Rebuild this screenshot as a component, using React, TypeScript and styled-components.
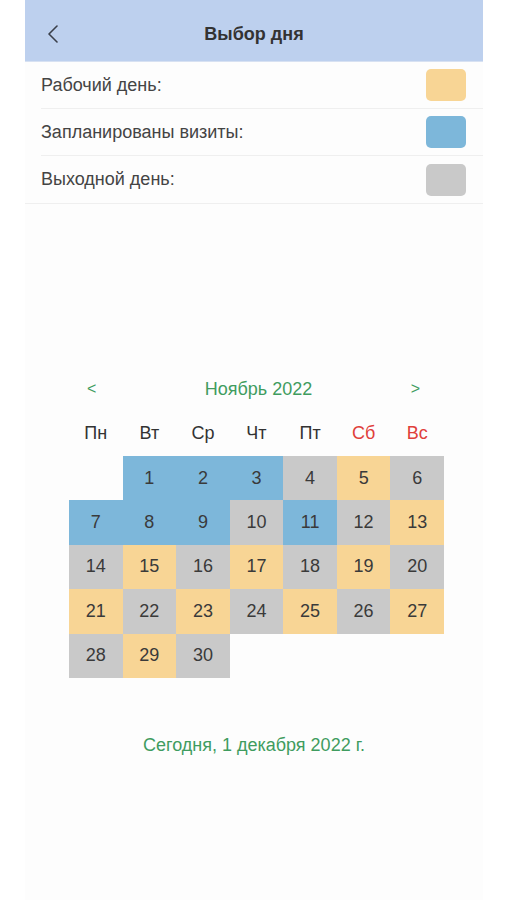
import React from 'react';
import styled, { createGlobalStyle } from 'styled-components';

const GlobalStyle = createGlobalStyle`
  html, body {
    margin: 0;
    padding: 0;
    background: #ffffff;
    font-family: "Liberation Sans", Arial, sans-serif;
  }
`;

const Screen = styled.div`
  width: 458px;
  min-height: 900px;
  margin-left: 25px;
  background: #fdfdfd;
  display: flex;
  flex-direction: column;
`;

const Header = styled.div`
  height: 62px;
  padding-top: 7px;
  background: #bdd0ee;
  display: flex;
  align-items: center;
  justify-content: center;
  position: relative;
  border-bottom: 1px solid #d7e1f2;
  box-sizing: border-box;
`;

const BackButton = styled.button`
  position: absolute;
  left: 18px;
  top: 24px;
  width: 20px;
  height: 20px;
  padding: 0;
  border: none;
  background: transparent;
  display: flex;
  align-items: center;
  justify-content: center;
`;

const Title = styled.div`
  font-size: 18px;
  font-weight: bold;
  color: #333333;
`;

const Legend = styled.div`
  border-bottom: 1px solid #efefef;
`;

const LegendRow = styled.div<{ $last?: boolean }>`
  height: 47px;
  margin-left: 16px;
  padding-right: 17px;
  display: flex;
  align-items: center;
  justify-content: space-between;
  border-bottom: ${p => (p.$last ? 'none' : '1px solid #efefef')};
  box-sizing: border-box;
`;

const LegendLabel = styled.span`
  font-size: 18px;
  color: #444444;
`;

const Swatch = styled.div<{ $color: string }>`
  width: 40px;
  height: 32px;
  border-radius: 5px;
  background: ${p => p.$color};
`;

const Calendar = styled.div`
  width: 375px;
  margin: 173px auto 0;
  padding-left: 5px;
`;

const MonthBar = styled.div`
  display: grid;
  grid-template-columns: 1fr auto 1fr;
  align-items: center;
  height: 24px;
  padding: 0 14px 0 18px;
  color: #3f9c5f;
  font-size: 18px;
`;

const NavArrow = styled.span<{ $right?: boolean }>`
  font-size: 16px;
  color: #3f9c5f;
  justify-self: ${p => (p.$right ? 'end' : 'start')};
  margin-right: ${p => (p.$right ? '10px' : '0')};
`;

const Grid = styled.div`
  display: grid;
  grid-template-columns: repeat(7, 1fr);
`;

const WeekDay = styled.div<{ $weekend?: boolean }>`
  height: 55px;
  padding-top: 21px;
  box-sizing: border-box;
  display: flex;
  align-items: flex-start;
  justify-content: center;
  font-size: 18px;
  line-height: 22px;
  color: ${p => (p.$weekend ? '#e0403a' : '#333333')};
`;

const DayCell = styled.div<{ $bg: string }>`
  height: 44.4px;
  display: flex;
  align-items: center;
  justify-content: center;
  font-size: 18px;
  color: #3a3a3a;
  background: ${p => p.$bg};
`;

const Today = styled.div`
  margin-top: 56px;
  text-align: center;
  font-size: 18px;
  line-height: 22px;
  color: #3f9c5f;
`;

const COLORS = {
  work: '#f8d595',
  visit: '#7db7da',
  off: '#c9c9c9',
  none: 'transparent',
};

type Kind = keyof typeof COLORS;

const weekDays = ['Пн', 'Вт', 'Ср', 'Чт', 'Пт', 'Сб', 'Вс'];

// первый день ноября 2022 — вторник
const days: { n?: number; kind: Kind }[] = [
  { kind: 'none' },
  { n: 1, kind: 'visit' },
  { n: 2, kind: 'visit' },
  { n: 3, kind: 'visit' },
  { n: 4, kind: 'off' },
  { n: 5, kind: 'work' },
  { n: 6, kind: 'off' },
  { n: 7, kind: 'visit' },
  { n: 8, kind: 'visit' },
  { n: 9, kind: 'visit' },
  { n: 10, kind: 'off' },
  { n: 11, kind: 'visit' },
  { n: 12, kind: 'off' },
  { n: 13, kind: 'work' },
  { n: 14, kind: 'off' },
  { n: 15, kind: 'work' },
  { n: 16, kind: 'off' },
  { n: 17, kind: 'work' },
  { n: 18, kind: 'off' },
  { n: 19, kind: 'work' },
  { n: 20, kind: 'off' },
  { n: 21, kind: 'work' },
  { n: 22, kind: 'off' },
  { n: 23, kind: 'work' },
  { n: 24, kind: 'off' },
  { n: 25, kind: 'work' },
  { n: 26, kind: 'off' },
  { n: 27, kind: 'work' },
  { n: 28, kind: 'off' },
  { n: 29, kind: 'work' },
  { n: 30, kind: 'off' },
];

const legend = [
  { label: 'Рабочий день:', color: COLORS.work },
  { label: 'Запланированы визиты:', color: COLORS.visit },
  { label: 'Выходной день:', color: COLORS.off },
];

export default function App() {
  return (
    <>
      <GlobalStyle />
      <Screen>
        <Header>
          <BackButton aria-label="Назад">
            <svg width="12" height="18" viewBox="0 0 12 18" fill="none">
              <path d="M10 1 L2 9 L10 17" stroke="#3a3f4a" strokeWidth="1.6" strokeLinecap="round" strokeLinejoin="round" />
            </svg>
          </BackButton>
          <Title>Выбор дня</Title>
        </Header>

        <Legend>
          {legend.map((item, i) => (
            <LegendRow key={item.label} $last={i === legend.length - 1}>
              <LegendLabel>{item.label}</LegendLabel>
              <Swatch $color={item.color} />
            </LegendRow>
          ))}
        </Legend>

        <Calendar>
          <MonthBar>
            <NavArrow>&lt;</NavArrow>
            <span>Ноябрь 2022</span>
            <NavArrow $right>&gt;</NavArrow>
          </MonthBar>
          <Grid>
            {weekDays.map((d, i) => (
              <WeekDay key={d} $weekend={i > 4}>{d}</WeekDay>
            ))}
            {days.map((d, i) => (
              <DayCell key={i} $bg={COLORS[d.kind]}>{d.n ?? ''}</DayCell>
            ))}
          </Grid>
        </Calendar>

        <Today>Сегодня, 1 декабря 2022 г.</Today>
      </Screen>
    </>
  );
}
